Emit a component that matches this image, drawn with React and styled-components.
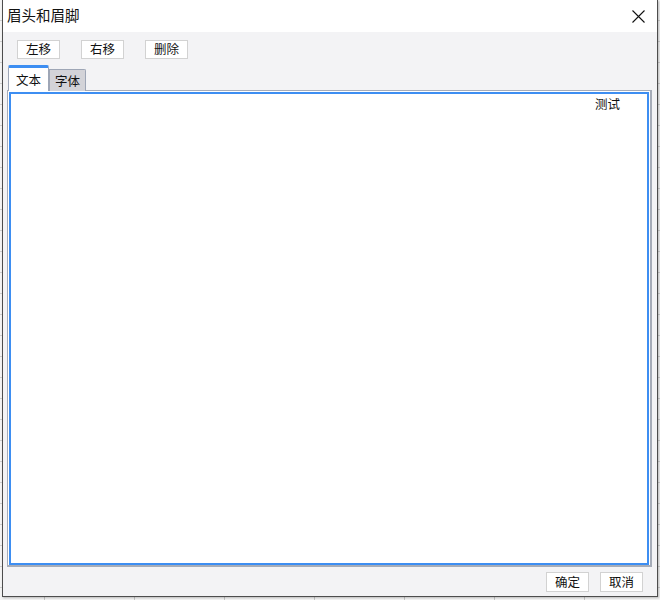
import styled, { createGlobalStyle } from 'styled-components'

const GlobalStyle = createGlobalStyle`
  html, body {
    margin: 0;
    padding: 0;
    width: 660px;
    height: 600px;
    overflow: hidden;
    font-family: "Noto Sans CJK SC", "Noto Sans", sans-serif;
    background-color: #f4f4f4;
    background-image:
      repeating-linear-gradient(to right, transparent 0 44px, #c6c6c6 44px 45px, transparent 45px 90px),
      repeating-linear-gradient(to bottom, transparent 0 20px, #d0d0d0 20px 21px);
  }
`

const Dialog = styled.div`
  margin-left: 2px;
  width: 656px;
  height: 597px;
  box-sizing: border-box;
  border: 1px solid #4d4d4d;
  border-top: none;
  display: flex;
  flex-direction: column;
  background: #f3f3f5;
  box-shadow: 1px 1px 2px rgba(0, 0, 0, 0.25);
`

const TitleBar = styled.div`
  height: 32px;
  flex-shrink: 0;
  background: #ffffff;
  display: flex;
  align-items: center;
  justify-content: space-between;
  padding: 0 12px 0 4px;
  box-sizing: border-box;
`

const Title = styled.span`
  font-size: 14.5px;
  color: #111;
  line-height: 1;
  margin-top: -1px;
`

const Close = styled.button`
  width: 14px;
  height: 14px;
  padding: 0;
  border: none;
  background: none;
  display: flex;
  align-items: center;
  justify-content: center;
`

const Toolbar = styled.div`
  display: flex;
  gap: 21px;
  padding: 8px 0 0 14px;
`

const Btn = styled.button`
  width: 43px;
  height: ${(p) => (p.$tall ? '20px' : '19px')};
  padding: 0;
  box-sizing: border-box;
  border: 1px solid #d2d2d2;
  background: #ffffff;
  font-family: "Noto Sans CJK SC", sans-serif;
  font-size: 12.5px;
  line-height: 1;
  color: #111;
  display: flex;
  align-items: center;
  justify-content: center;
`

const Tabs = styled.div`
  display: flex;
  align-items: flex-end;
  margin: 6px 0 0 5px;
  height: 26px;
  position: relative;
  z-index: 1;
`

const Tab = styled.div`
  box-sizing: border-box;
  height: ${(p) => (p.$active ? '26px' : '22px')};
  width: ${(p) => (p.$active ? '41px' : '37px')};
  background: ${(p) => (p.$active ? '#ffffff' : '#d3d3d8')};
  border: 1px solid #9ea6b6;
  border-top: ${(p) => (p.$active ? '3px solid #3d8ef2' : '1px solid #9ea6b6')};
  border-bottom: none;
  border-radius: ${(p) => (p.$active ? '2px 2px 0 0' : '0 2px 0 0')};
  font-size: 12.5px;
  color: #111;
  display: flex;
  align-items: center;
  justify-content: center;
  padding-bottom: 1px;
`

const Panel = styled.div`
  margin: -1px 0 0 4px;
  width: 645px;
  height: 477px;
  box-sizing: border-box;
  border: 2px solid #a6acb8;
  border-top-width: 1px;
  border-left-width: 1px;
  padding: 1px 1px 0 1px;
  background: #ffffff;
`

const Editor = styled.div`
  height: 100%;
  box-sizing: border-box;
  border: 2px solid #3d8ef2;
  padding: 1px 27px 0 0;
  display: flex;
  justify-content: flex-end;
  align-items: flex-start;
`

const Cell = styled.span`
  font-size: 12.5px;
  color: #111;
  line-height: 18px;
`

const Footer = styled.div`
  display: flex;
  justify-content: flex-end;
  gap: 11px;
  padding: 5px 14px 0 0;
`

export default function App() {
  return (
    <>
      <GlobalStyle />
      <Dialog>
        <TitleBar>
          <Title>眉头和眉脚</Title>
          <Close aria-label="关闭">
            <svg width="13" height="13" viewBox="0 0 13 13">
              <path d="M0.5 0.5L12.5 12.5M12.5 0.5L0.5 12.5" stroke="#111" strokeWidth="1.1" />
            </svg>
          </Close>
        </TitleBar>
        <Toolbar>
          <Btn>左移</Btn>
          <Btn>右移</Btn>
          <Btn>删除</Btn>
        </Toolbar>
        <Tabs>
          <Tab $active>文本</Tab>
          <Tab>字体</Tab>
        </Tabs>
        <Panel>
          <Editor>
            <Cell>测试</Cell>
          </Editor>
        </Panel>
        <Footer>
          <Btn $tall>确定</Btn>
          <Btn $tall>取消</Btn>
        </Footer>
      </Dialog>
    </>
  )
}
